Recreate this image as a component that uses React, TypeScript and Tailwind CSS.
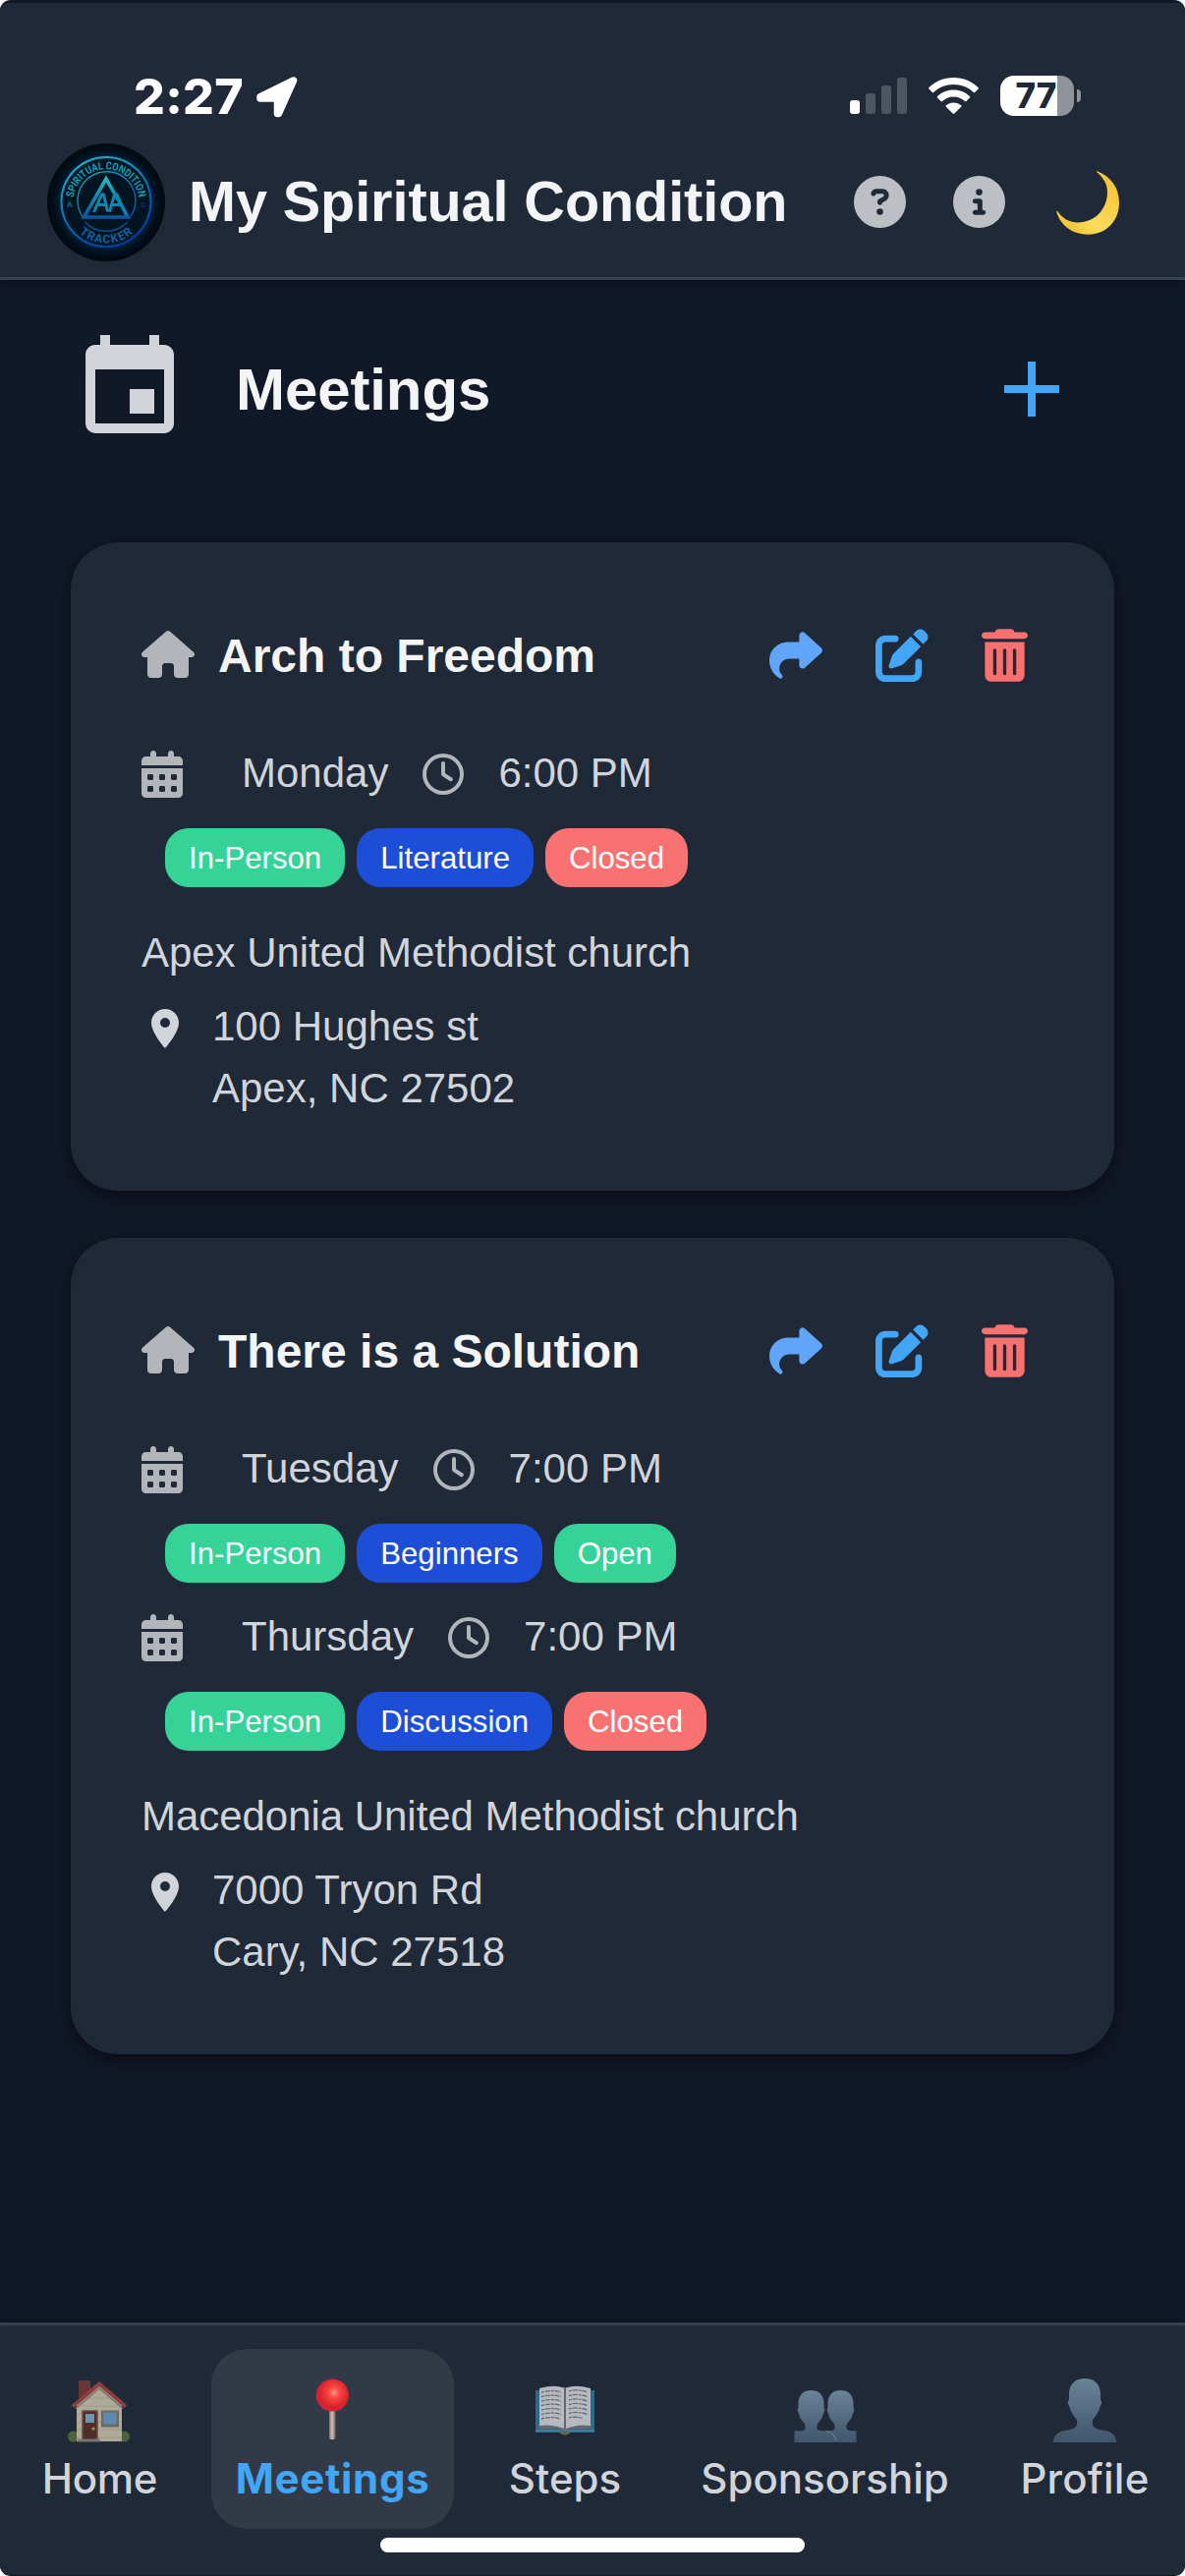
import React from "react";
import {
  FaCircleQuestion,
  FaCircleInfo,
  FaHouse,
  FaShare,
  FaPenToSquare,
  FaTrashCan,
  FaCalendarDays,
  FaRegClock,
} from "react-icons/fa6";
import { MdEvent, MdAdd, MdPlace } from "react-icons/md";

type Tone = "green" | "blue" | "red";
type Tag = { label: string; tone: Tone };
type Slot = { day: string; time: string; tags: Tag[] };
type Meeting = { name: string; slots: Slot[]; place: string; street: string; city: string };

const tones: Record<Tone, string> = {
  green: "bg-[#36d399]",
  blue: "bg-[#1d4ed8]",
  red: "bg-[#f87272]",
};

const meetings: Meeting[] = [
  {
    name: "Arch to Freedom",
    slots: [
      {
        day: "Monday",
        time: "6:00 PM",
        tags: [
          { label: "In-Person", tone: "green" },
          { label: "Literature", tone: "blue" },
          { label: "Closed", tone: "red" },
        ],
      },
    ],
    place: "Apex United Methodist church",
    street: "100 Hughes st",
    city: "Apex, NC 27502",
  },
  {
    name: "There is a Solution",
    slots: [
      {
        day: "Tuesday",
        time: "7:00 PM",
        tags: [
          { label: "In-Person", tone: "green" },
          { label: "Beginners", tone: "blue" },
          { label: "Open", tone: "green" },
        ],
      },
      {
        day: "Thursday",
        time: "7:00 PM",
        tags: [
          { label: "In-Person", tone: "green" },
          { label: "Discussion", tone: "blue" },
          { label: "Closed", tone: "red" },
        ],
      },
    ],
    place: "Macedonia United Methodist church",
    street: "7000 Tryon Rd",
    city: "Cary, NC 27518",
  },
];

function StatusBar() {
  return (
    <div className="flex h-[74px] items-start pl-[136px] pr-[106px] font-['Inter',sans-serif] text-white">
      <span className="mt-px w-[112px] whitespace-nowrap text-[50px] leading-[44px] font-extrabold tracking-[0.3px]">2:27</span>
      <svg className="ml-[13px] mt-[3px] h-[42px] w-[42px]" viewBox="0 0 42 42">
        <path
          d="M37.500 4 4 20.500 4 22 21.500 22 21.500 37.500 22.500 37.500Z"
          fill="white"
          stroke="white"
          strokeWidth="7.500"
          strokeLinejoin="round"
        />
      </svg>
      <div className="ml-auto flex">
        <svg className="mt-[4px] h-[37px] w-[58px]" viewBox="0 0 58 37">
          <rect x="0" y="23" width="10" height="14" rx="3" fill="white" />
          <rect x="16" y="16" width="10" height="21" rx="3" fill="#4d5560" />
          <rect x="32" y="8" width="10" height="29" rx="3" fill="#4d5560" />
          <rect x="48" y="0" width="10" height="37" rx="3" fill="#4d5560" />
        </svg>
        <svg className="ml-[22px] mt-[4px] h-[37px] w-[51px]" viewBox="0 0 51 37" fill="white">
          <path d="M25.500 0C35.500 0 44.500 3.900 50.600 10.100Q51.200 10.800 50.600 11.500L47.200 15Q46.500 15.600 45.800 15C40.500 9.800 33.400 7 25.500 7S10.500 9.800 5.200 15Q4.500 15.600 3.800 15L.4 11.500Q-.2 10.800 .4 10.100C6.500 3.900 15.500 0 25.500 0Z" />
          <path d="M25.500 12.500C32 12.500 37.800 15 42 19.100Q42.600 19.800 42 20.400L38.400 24.100Q37.700 24.700 37 24.100C34 21.200 30 19.500 25.500 19.500S17 21.200 14 24.100Q13.300 24.700 12.600 24.100L9 20.400Q8.400 19.800 9 19.100C13.200 15 19 12.500 25.500 12.500Z" />
          <path d="M25.500 25.400C28.500 25.400 31.200 26.500 33.200 28.300Q33.900 29 33.200 29.700L26.300 36.600Q25.500 37.300 24.700 36.600L17.800 29.700Q17.100 29 17.800 28.300C19.800 26.500 22.500 25.400 25.500 25.400Z" />
        </svg>
        <div className="ml-[22px] mt-[2px] flex h-[41px] w-[75px] items-center justify-center rounded-[14px] bg-[linear-gradient(to_right,white_0_58px,#8f949b_58px)] pr-[2px] text-[35px] leading-[41px] font-extrabold text-[#1f2937]">
          77
        </div>
        <div className="ml-[3px] mt-[16px] h-[13px] w-[4px] rounded-r-full bg-[#8f949b]" />
      </div>
    </div>
  );
}

function Logo() {
  return (
    <svg className="h-[120px] w-[120px] shrink-0" viewBox="0 0 120 120">
      <defs>
        <linearGradient id="ring" gradientUnits="userSpaceOnUse" x1="40" y1="14" x2="85" y2="105">
          <stop offset="0" stopColor="#17b6c2" />
          <stop offset="0.5" stopColor="#0a6cab" />
          <stop offset="1" stopColor="#0636a0" />
        </linearGradient>
        <linearGradient id="mark" x1="0" y1="0" x2="0" y2="1">
          <stop offset="0" stopColor="#18b9c6" />
          <stop offset="1" stopColor="#0b559f" />
        </linearGradient>
        <radialGradient id="halo">
          <stop offset="0" stopColor="#02141f" />
          <stop offset="0.7" stopColor="#021420" />
          <stop offset="0.78" stopColor="#021c38" />
          <stop offset="0.9" stopColor="#020d18" />
          <stop offset="1" stopColor="#02090f" />
        </radialGradient>
        <path id="upper" d="M27.430 68.730A33.700 33.700 0 1 1 92.570 68.730" />
        <path id="lower" d="M18.500 60A41.500 41.500 0 0 0 101.500 60" />
      </defs>
      <circle cx="60" cy="60" r="60" fill="url(#halo)" />
      <circle cx="60" cy="59.500" r="45.500" fill="none" stroke="url(#ring)" strokeWidth="2" />
      <path d="M37 76A29.500 29.500 0 1 1 85 74.500" fill="none" stroke="url(#ring)" strokeWidth="1.500" />
      <path d="M38.500 80A29.500 29.500 0 0 0 81.500 80" fill="none" stroke="#0a4f95" strokeWidth="1.500" />
      <path d="M60 36 37.500 75 82.500 75Z" fill="none" stroke="url(#mark)" strokeWidth="3.600" />
      <path d="M47.500 70 55.500 52H57.500L61.500 69.500M51 62.500H60M63.500 69.500 68.500 52H71L80.500 73M66 62.500H76" fill="none" stroke="#0f86b0" strokeWidth="3" />
      <text fill="#159fb2" fontFamily="Roboto, sans-serif" fontWeight="700" fontSize="11">
        <textPath href="#upper" startOffset="50%" textAnchor="middle" textLength="96" lengthAdjust="spacingAndGlyphs">
          SPIRITUAL CONDITION
        </textPath>
      </text>
      <text fill="#0c61a5" fontFamily="Roboto, sans-serif" fontWeight="700" fontSize="12">
        <textPath href="#lower" startOffset="50%" textAnchor="middle" textLength="60">
          TRACKER
        </textPath>
      </text>
      <path d="M20.500 65 22.500 59.500 25.500 65M21.500 63.200H24.500" fill="none" stroke="#0b5f87" strokeWidth="1.300" />
      <path d="M95 61H99.500M95 64H99.500" stroke="#0a3566" strokeWidth="1.300" />
    </svg>
  );
}

function Moon() {
  return (
    <svg className="h-[65px] w-[64px]" viewBox="0 0 64 65">
      <defs>
        <linearGradient id="moon" x1="0.2" y1="1" x2="0.9" y2="0.2">
          <stop offset="0" stopColor="#f2bf2c" />
          <stop offset="0.35" stopColor="#fbdc5c" />
          <stop offset="1" stopColor="#f5c63a" />
        </linearGradient>
      </defs>
      <path
        d="M41.500 .3C55.500 5.500 64 17 64 32.500C64 51 50.500 64.700 32.500 64.700C17 64.700 4.500 56 .2 41.800C-.1 40.600 .9 40.500 1.600 41.500C6.500 48.500 13.500 52.500 22 52.500C39.500 52.500 52 38.500 52 21.500C52 13.500 48 7 41.500 1.500C40.700 .8 40.800 .1 41.500 .3Z"
        fill="url(#moon)"
      />
    </svg>
  );
}

function MeetingCard({ meeting }: { meeting: Meeting }) {
  return (
    <article className="rounded-[48px] bg-[#1f2937] p-[72px] text-[42px] leading-[63px] text-[#d1d5db] shadow-[0_6px_18px_rgba(0,0,0,0.5)]">
      <div className="mb-[46px] flex h-[86px] items-center">
        <FaHouse className="mb-[2px] h-[48px] w-[54px] text-[#b2b6bb]" />
        <h2 className="ml-6 pt-px text-[48px] leading-[72px] font-bold text-gray-100">{meeting.name}</h2>
        <div className="ml-auto flex items-center gap-[54px] pr-4">
          <FaShare className="h-[54px] w-[54px] text-[#60a5fa]" />
          <FaPenToSquare className="h-[54px] w-[54px] text-[#42a5f5]" />
          <FaTrashCan className="h-[54px] w-[47px] text-[#f87171]" />
        </div>
      </div>
      <div className="flex flex-col gap-6">
        {meeting.slots.map((slot) => (
          <div key={slot.day}>
            <div className="flex items-center">
              <FaCalendarDays className="h-[48px] w-[42px] text-[#b2b6bb]" />
              <span className="ml-[60px] -mt-px mb-px">{slot.day}</span>
              <FaRegClock className="mr-[35px] ml-[35px] h-[42px] w-[42px] text-[#b2b6bb]" />
              <span className="-mt-px mb-px">{slot.time}</span>
            </div>
            <div className="mt-6 ml-6 flex gap-3">
              {slot.tags.map((tag) => (
                <span
                  key={tag.label}
                  className={`h-[60px] rounded-[24px] px-6 pt-px text-[31.2px] leading-[60px] text-white ${tones[tag.tone]}`}
                >
                  {tag.label}
                </span>
              ))}
            </div>
          </div>
        ))}
      </div>
      <p className="mt-[35px] tracking-[-0.04px]">{meeting.place}</p>
      <div className="mt-[13px] flex">
        <MdPlace className="mt-[9px] h-12 w-12" />
        <p className="-mt-px mb-px ml-6">
          {meeting.street}
          <br />
          {meeting.city}
        </p>
      </div>
    </article>
  );
}

function HomeEmoji() {
  return (
    <svg className="h-[66px] w-[66px] opacity-80" viewBox="0 0 66 66">
      <rect x="11" y="2" width="12" height="20" fill="#7d3836" />
      <circle cx="5.500" cy="59" r="5.500" fill="#55733a" />
      <circle cx="57.500" cy="59" r="5.500" fill="#55733a" />
      <path d="M9 26 32 6 55 26V64H9Z" fill="#d3c9b3" />
      <path d="M9 36H55M9 44H55M9 52H55M17 20H47M9 28H55M9 60H55" stroke="#bfb59e" strokeWidth="1" />
      <path d="M5 28.500 32 5.500 59 28.500" fill="none" stroke="#a94442" strokeWidth="4" />
      <path d="M8 30.500 32 10 56 30.500" fill="none" stroke="#8d8374" strokeWidth="1.500" />
      <rect x="14.500" y="32.500" width="16" height="30" fill="#5b2f28" />
      <path d="M15 62V33H30V62" fill="none" stroke="#8a6a5c" strokeWidth="1" />
      <rect x="18" y="36" width="9" height="9" fill="#7eb0d3" />
      <circle cx="26" cy="51" r="1.600" fill="#dcb24a" />
      <rect x="34" y="32.500" width="18" height="17" fill="#857a6f" />
      <rect x="36.500" y="34.500" width="13" height="12" fill="#6da3cf" />
      <rect x="10" y="61.500" width="23" height="3" fill="#8d8986" />
    </svg>
  );
}

function PinEmoji() {
  return (
    <svg className="h-[66px] w-[66px]" viewBox="0 0 66 66">
      <defs>
        <radialGradient id="ball" cx="0.55" cy="0.42" r="0.6">
          <stop offset="0" stopColor="#ff8f80" />
          <stop offset="0.3" stopColor="#f8463f" />
          <stop offset="0.75" stopColor="#d92029" />
          <stop offset="1" stopColor="#c62a48" />
        </radialGradient>
        <linearGradient id="needle">
          <stop offset="0" stopColor="#7d6d68" />
          <stop offset="0.45" stopColor="#d8c3b7" />
          <stop offset="1" stopColor="#6f5f5c" />
        </linearGradient>
      </defs>
      <rect x="29" y="30" width="6.500" height="32" rx="2" fill="url(#needle)" />
      <circle cx="32.300" cy="17" r="16.600" fill="url(#ball)" />
    </svg>
  );
}

function BookEmoji() {
  return (
    <svg className="h-[66px] w-[66px] opacity-80" viewBox="0 0 66 66">
      <path d="M3 12H63V55H37Q33 59 29 55H3Z" fill="#2f7ba0" />
      <path d="M3 53H63" stroke="#69a9c4" strokeWidth="1" />
      <path d="M28 54Q33 59 38 54" fill="none" stroke="#8d7d34" strokeWidth="2" />
      <path d="M6 47Q20 45 33 50Q46 45 60 47V51H38Q33 54 28 51H6Z" fill="#77787b" />
      <path d="M7 10Q22 6 32 9.500V51Q20 46 7 48Z" fill="#dcdde2" />
      <path d="M59 10Q44 6 34 9.500V51Q46 46 59 48Z" fill="#dcdde2" />
      <path d="M32 9H34V52H32Z" fill="#76787c" />
      <path
        d="M9 14Q20 11 29 14M9 18.500Q20 15.500 29 18.500M9 23Q20 20 29 23M9 27.500Q20 24.500 29 27.500M9 32Q20 29 29 32M9 36.500Q20 33.500 29 36.500M9 41Q20 38 28 41M37 13Q46 10 56 14M37 17.500Q46 15 56 18.500M37 22Q46 19.500 56 23M37 26.500Q46 24 56 27.500M37 31Q46 28.500 56 32M37 35.500Q46 33 56 36.500M37 40Q44 38 51 40.500"
        fill="none"
        stroke="#7b7d82"
        strokeWidth="1.300"
        strokeDasharray="3 0.800 5 1"
      />
    </svg>
  );
}

function GroupEmoji() {
  return (
    <svg className="h-[66px] w-[66px]" viewBox="0 0 66 66">
      <defs>
        <linearGradient id="bust" x1="0" y1="0" x2="0" y2="1">
          <stop offset="0" stopColor="#6b8397" />
          <stop offset="0.6" stopColor="#50677e" />
          <stop offset="1" stopColor="#41566c" />
        </linearGradient>
      </defs>
      <path
        d="M48.500 12C56 12 61.500 16.500 61.500 25V29.500C63 31 62 34.500 61 35.500C60 40.500 57.500 43 55.500 45.500C54 48.500 54 51.500 56 52.500C58.500 53.600 61.500 53 64.500 53.500V65H30V53.500C34 53 38.500 54 41 52.500C43 51.500 43 48.500 41.500 45.500C39.500 43 37 40.500 36 35.500C35 34.500 34 31 35.500 29.500V25C35.500 16.500 41 12 48.500 12Z"
        fill="url(#bust)"
      />
      <path
        d="M18.500 12C26 12 31.500 16.500 31.500 25V29.500C33 31 32 34.500 31 35.500C30 40.500 27.500 43 25.500 45.500C24 48.500 24 51.500 26 52.500C31 54.500 43.500 51.500 43.500 65H1.500V53.500C4.500 53 8.500 54 11 52.500C13 51.500 13 48.500 11.500 45.500C9.500 43 7 40.500 6 35.500C5 34.500 4 31 5.500 29.500V25C5.500 16.500 11 12 18.500 12Z"
        fill="url(#bust)"
      />
      <path d="M34 53.500Q42 54.500 43.500 63" fill="none" stroke="#6f889b" strokeWidth="1" />
    </svg>
  );
}

function PersonEmoji() {
  return (
    <svg className="h-[66px] w-[66px]" viewBox="0 0 66 66">
      <path
        d="M33 0C43 0 49 6 49 16V21.500C51 23 50 27.500 48.500 28.500C47.500 34.500 44 38 41.500 41.500C40 45 40.500 47.500 42.500 49.500C47 53.500 56 51.500 61.500 56.500C64 59 65 62 65 65H1C1 62 2 59 4.500 56.500C10 51.500 19 53.500 23.500 49.500C25.500 47.500 26 45 24.500 41.500C22 38 18.500 34.500 17.500 28.500C16 27.500 15 23 17 21.500V16C17 6 23 0 33 0Z"
        fill="url(#bust)"
      />
    </svg>
  );
}

const tabs = [
  { label: "Home", icon: <HomeEmoji />, box: "w-[203px] mr-[12px] font-medium tracking-[-0.3px]" },
  {
    label: "Meetings",
    icon: <PinEmoji />,
    box: "w-[247px] rounded-[36px] bg-[#313a46] font-bold tracking-[0.7px] text-[#42a5f5]",
  },
  { label: "Steps", icon: <BookEmoji />, box: "w-[226px] font-medium" },
  { label: "Sponsorship", icon: <GroupEmoji />, box: "w-[303px] font-medium" },
  { label: "Profile", icon: <PersonEmoji />, box: "w-[226px] font-medium tracking-[0.2px]" },
];

export default function App() {
  return (
    <div className="h-[2622px] w-[1206px] bg-white">
      <div className="flex h-full flex-col overflow-hidden rounded-[11px] bg-[#111827] pt-[3px] pb-px font-['Liberation_Sans',Arial,sans-serif]">
        <header className="h-[282px] shrink-0 border-b-[3px] border-[#374151] bg-[#1f2937] pt-[72px] shadow-[0_3px_9px_rgba(0,0,0,0.3)]">
          <StatusBar />
          <div className="-mt-[3px] flex h-[120px] items-center pr-[67px] pl-12">
            <Logo />
            <h1 className="-mt-[3px] ml-6 text-[57.6px] leading-[70px] font-bold tracking-[-0.08px] whitespace-nowrap text-gray-100">
              My Spiritual Condition
            </h1>
            <div className="mr-[52px] mb-[2px] ml-auto flex gap-12">
              <FaCircleQuestion className="h-[53px] w-[53px] text-[#bcc0c5]" />
              <FaCircleInfo className="h-[53px] w-[53px] text-[#bcc0c5]" />
            </div>
            <Moon />
          </div>
        </header>

        <main className="flex-1 px-[72px]">
          <div className="flex h-[267px] items-start pt-[51px]">
            <MdEvent className="h-[120px] w-[120px] text-[#d1d5db]" />
            <h2 className="mt-px ml-12 text-[60px] leading-[120px] font-bold tracking-[-0.1px] text-gray-100">Meetings</h2>
            <MdAdd className="mt-3 mr-9 ml-auto h-24 w-24 text-[#42a5f5]" />
          </div>
          <div className="flex flex-col gap-12">
            {meetings.map((m) => (
              <MeetingCard key={m.name} meeting={m} />
            ))}
          </div>
        </main>

        <nav className="flex h-[257px] shrink-0 flex-col items-center border-t-[3px] border-[#374151] bg-[#1f2937] pt-6 shadow-[0_-3px_12px_rgba(0,0,0,0.2)]">
          <div className="flex w-full font-['Inter',sans-serif] text-[42px] text-[#d1d5db]">
            {tabs.map((tab) => (
              <div key={tab.label} className={`flex h-[183px] shrink-0 flex-col items-center pt-[30px] ${tab.box}`}>
                {tab.icon}
                <span className="mt-[11px] leading-[50px]">{tab.label}</span>
              </div>
            ))}
          </div>
          <div className="mt-[9px] h-[15px] w-[432px] rounded-full bg-white" />
        </nav>
      </div>
    </div>
  );
}
